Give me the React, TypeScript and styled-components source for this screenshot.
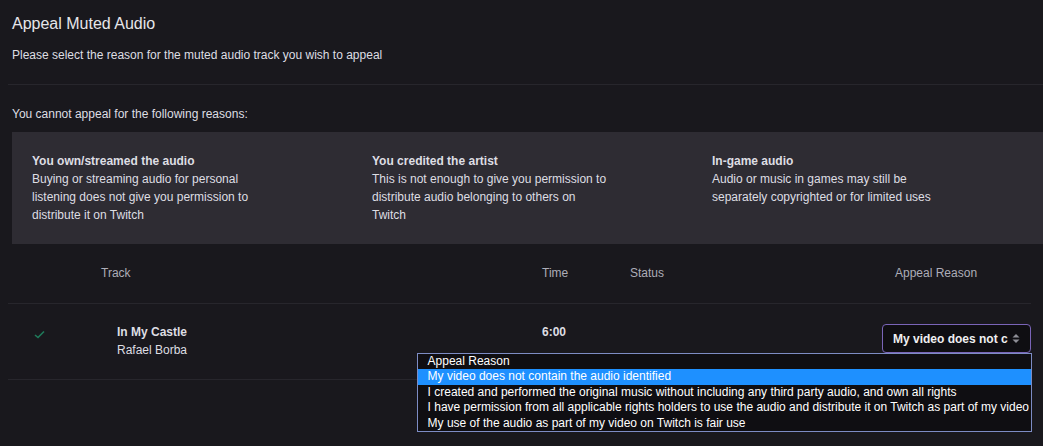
import React from "react";
import styled, { createGlobalStyle } from "styled-components";

const Global = createGlobalStyle`
  html, body { margin: 0; padding: 0; background: #19181d; }
  body { font-family: "Liberation Sans", Arial, sans-serif; color: #dedee3; font-size: 12px; }
  * { box-sizing: border-box; }
`;

const Page = styled.div`
  width: 1043px;
  height: 446px;
  overflow: hidden;
  background: #19181d;
  padding: 14px 0 0 12px;
`;

const Title = styled.h1`
  margin: 0;
  font-size: 16px;
  line-height: 20px;
  font-weight: 400;
  color: #e6e6ea;
`;

const Text = styled.p<{ $top?: number }>`
  margin: ${(p) => p.$top ?? 0}px 0 0;
  font-size: 12px;
  line-height: 18px;
  color: #dedee3;
`;

const Divider = styled.hr<{ $top?: number }>`
  border: 0;
  height: 1px;
  background: #27262c;
  margin: ${(p) => p.$top ?? 0}px 0 0 -4px;
`;

const ReasonPanel = styled.div`
  margin-top: 9px;
  background: #2e2c33;
  display: grid;
  grid-template-columns: 340px 340px 1fr;
  padding: 20px 0 20px 20px;
  height: 112px;
`;

const Reason = styled.div`
  padding-right: 102px;
  font-size: 12px;
  line-height: 18px;
  color: #dedee3;
`;

const ReasonTitle = styled.div`
  font-weight: 700;
`;

const Table = styled.div`
  width: 1019px;
`;

const HeaderRow = styled.div`
  display: grid;
  grid-template-columns: 89px 441px 88px 1fr 149px;
  padding: 20px 0 21px;
  font-size: 12px;
  line-height: 18px;
  color: #adadb8;
`;

const HeaderCell = styled.div<{ $indent?: number }>`
  padding-left: ${(p) => p.$indent ?? 0}px;
`;

const BodyRow = styled.div`
  display: grid;
  grid-template-columns: 89px 441px 88px 1fr 149px;
  align-items: start;
  padding: 19px 0 0;
  height: 75px;
  font-size: 12px;
  line-height: 18px;
`;

const CheckCell = styled.div`
  padding: 3px 0 0 22px;
`;

const TrackCell = styled.div`
  padding-left: 16px;
  color: #dedee3;
`;

const TrackName = styled.div`
  font-weight: 700;
`;

const TimeCell = styled.div`
  font-weight: 700;
  color: #dedee3;
`;

const SelectWrap = styled.div`
  position: relative;
  margin-top: 1px;
`;

const SelectBox = styled.div`
  height: 29px;
  border: 1px solid #7a64b8;
  border-radius: 4px;
  background: #0f0e12;
  display: flex;
  align-items: center;
  justify-content: space-between;
  padding: 0 10px 0 10px;
  font-weight: 700;
  font-size: 12px;
  color: #efeff1;
  white-space: nowrap;
  overflow: hidden;
`;

const DropList = styled.ul`
  position: absolute;
  top: 29px;
  right: -1px;
  margin: 0;
  padding: 0;
  list-style: none;
  background: #0f0e12;
  border: 1px solid #7d8cc4;
  white-space: nowrap;
  z-index: 5;
`;

const Option = styled.li<{ $active?: boolean }>`
  padding: 0 2px 0 10px;
  height: 15.4px;
  line-height: 15.4px;
  font-size: 12px;
  color: #ffffff;
  background: ${(p) => (p.$active ? "#1e90ff" : "transparent")};
`;

const options = [
  "Appeal Reason",
  "My video does not contain the audio identified",
  "I created and performed the original music without including any third party audio, and own all rights",
  "I have permission from all applicable rights holders to use the audio and distribute it on Twitch as part of my video",
  "My use of the audio as part of my video on Twitch is fair use",
];

export default function App() {
  return (
    <>
      <Global />
      <Page>
        <Title>Appeal Muted Audio</Title>
        <Text $top={12}>Please select the reason for the muted audio track you wish to appeal</Text>
        <Divider $top={20} />
        <Text $top={20}>You cannot appeal for the following reasons:</Text>
        <ReasonPanel>
          <Reason>
            <ReasonTitle>You own/streamed the audio</ReasonTitle>
            Buying or streaming audio for personal listening does not give you permission to distribute it on Twitch
          </Reason>
          <Reason>
            <ReasonTitle>You credited the artist</ReasonTitle>
            This is not enough to give you permission to distribute audio belonging to others on Twitch
          </Reason>
          <Reason>
            <ReasonTitle>In-game audio</ReasonTitle>
            Audio or music in games may still be separately copyrighted or for limited uses
          </Reason>
        </ReasonPanel>
        <Table>
          <HeaderRow>
            <HeaderCell />
            <HeaderCell>Track</HeaderCell>
            <HeaderCell>Time</HeaderCell>
            <HeaderCell>Status</HeaderCell>
            <HeaderCell $indent={13}>Appeal Reason</HeaderCell>
          </HeaderRow>
          <Divider />
          <BodyRow>
            <CheckCell>
              <svg width="11" height="9" viewBox="0 0 11 9">
                <polyline points="1,5 4,7.5 10,1.5" fill="none" stroke="#1f7a5a" strokeWidth="1.6" />
              </svg>
            </CheckCell>
            <TrackCell>
              <TrackName>In My Castle</TrackName>
              Rafael Borba
            </TrackCell>
            <TimeCell>6:00</TimeCell>
            <div />
            <SelectWrap>
              <SelectBox>
                <span>My video does not c</span>
                <svg width="8" height="11" viewBox="0 0 8 11">
                  <polygon points="4,1 7.5,4.5 0.5,4.5" fill="#8e8e96" />
                  <polygon points="4,10 7.5,6.5 0.5,6.5" fill="#8e8e96" />
                </svg>
              </SelectBox>
              <DropList>
                {options.map((o, i) => (
                  <Option key={o} $active={i === 1}>
                    {o}
                  </Option>
                ))}
              </DropList>
            </SelectWrap>
          </BodyRow>
          <Divider />
        </Table>
      </Page>
    </>
  );
}
